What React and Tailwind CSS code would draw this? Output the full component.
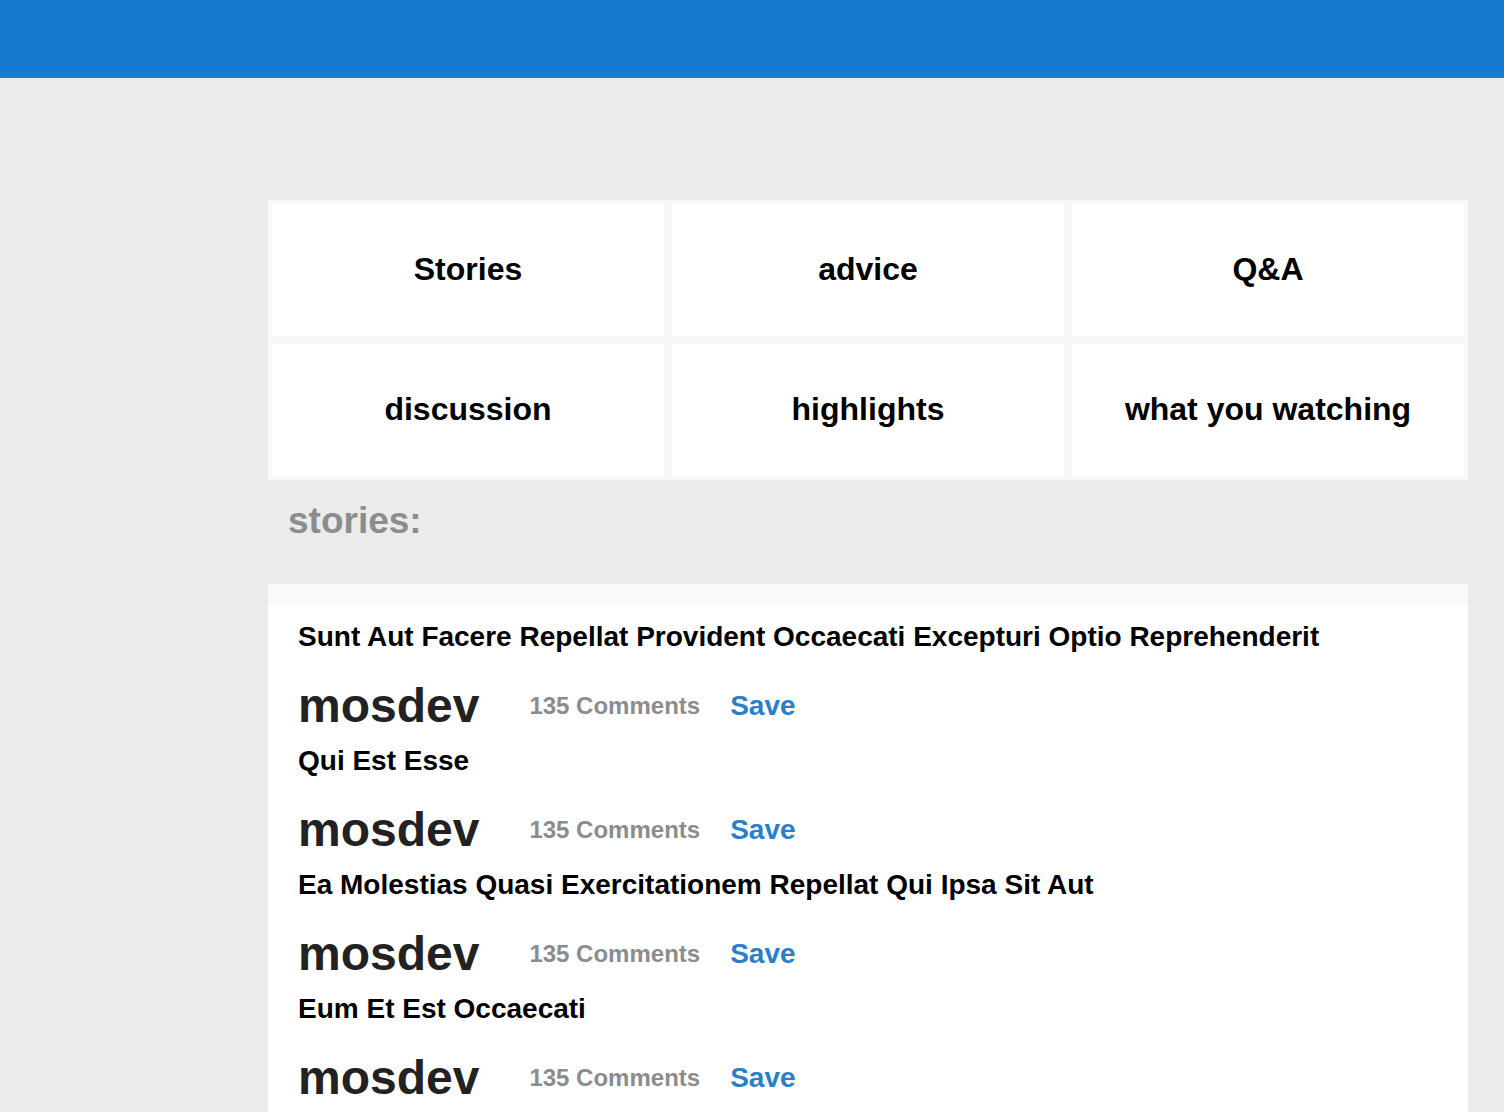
import React from "react";

const categories = ["Stories", "advice", "Q&A", "discussion", "highlights", "what you watching"];

const posts = [
    "Sunt Aut Facere Repellat Provident Occaecati Excepturi Optio Reprehenderit",
    "Qui Est Esse",
    "Ea Molestias Quasi Exercitationem Repellat Qui Ipsa Sit Aut",
    "Eum Et Est Occaecati",
];

export default function App() {
    return (
        <div className="min-h-screen bg-[#ebebeb] font-['Liberation_Sans',Arial,sans-serif]">
            {/* top bar */}
            <header className="h-[78px] bg-[#167bd0]" />

            <main className="ml-[268px] w-[1200px] pt-[122px]">
                {/* category grid */}
                <div className="grid grid-cols-3 gap-2 p-1 bg-[#f8f8f8]">
                    {categories.map((c) => (
                        <button
                            key={c}
                            className="h-[132px] pb-0.5 bg-white flex items-center justify-center text-[32px] font-bold text-black leading-none"
                        >
                            {c}
                        </button>
                    ))}
                </div>

                <h2 className="h-[104px] pt-[22px] pl-5 text-[37px] font-bold leading-none text-[#8c8c8c]">stories:</h2>

                {/* posts list */}
                <div className="bg-white">
                    <div className="h-5 bg-[#f9f9f9]" />
                    <div className="flex flex-col gap-[17px] px-[30px] pt-[19px] pb-8">
                        {posts.map((title) => (
                            <PostItem key={title} title={title} />
                        ))}
                    </div>
                </div>
            </main>
        </div>
    );
}

function PostItem({ title }) {
    return (
        <div>
            <h3 className="text-[28px] font-bold leading-none text-black">{title}</h3>
            <div className="mt-[31px] h-12 flex items-center">
                <span className="text-[48px] font-bold leading-none text-[#222]">mosdev</span>
                <span className="ml-[50px] text-2xl font-bold leading-none text-[#8a8c8e]">135 Comments</span>
                <button className="ml-[30px] text-[28px] font-bold leading-none text-[#2a80c8]">Save</button>
            </div>
        </div>
    );
}
